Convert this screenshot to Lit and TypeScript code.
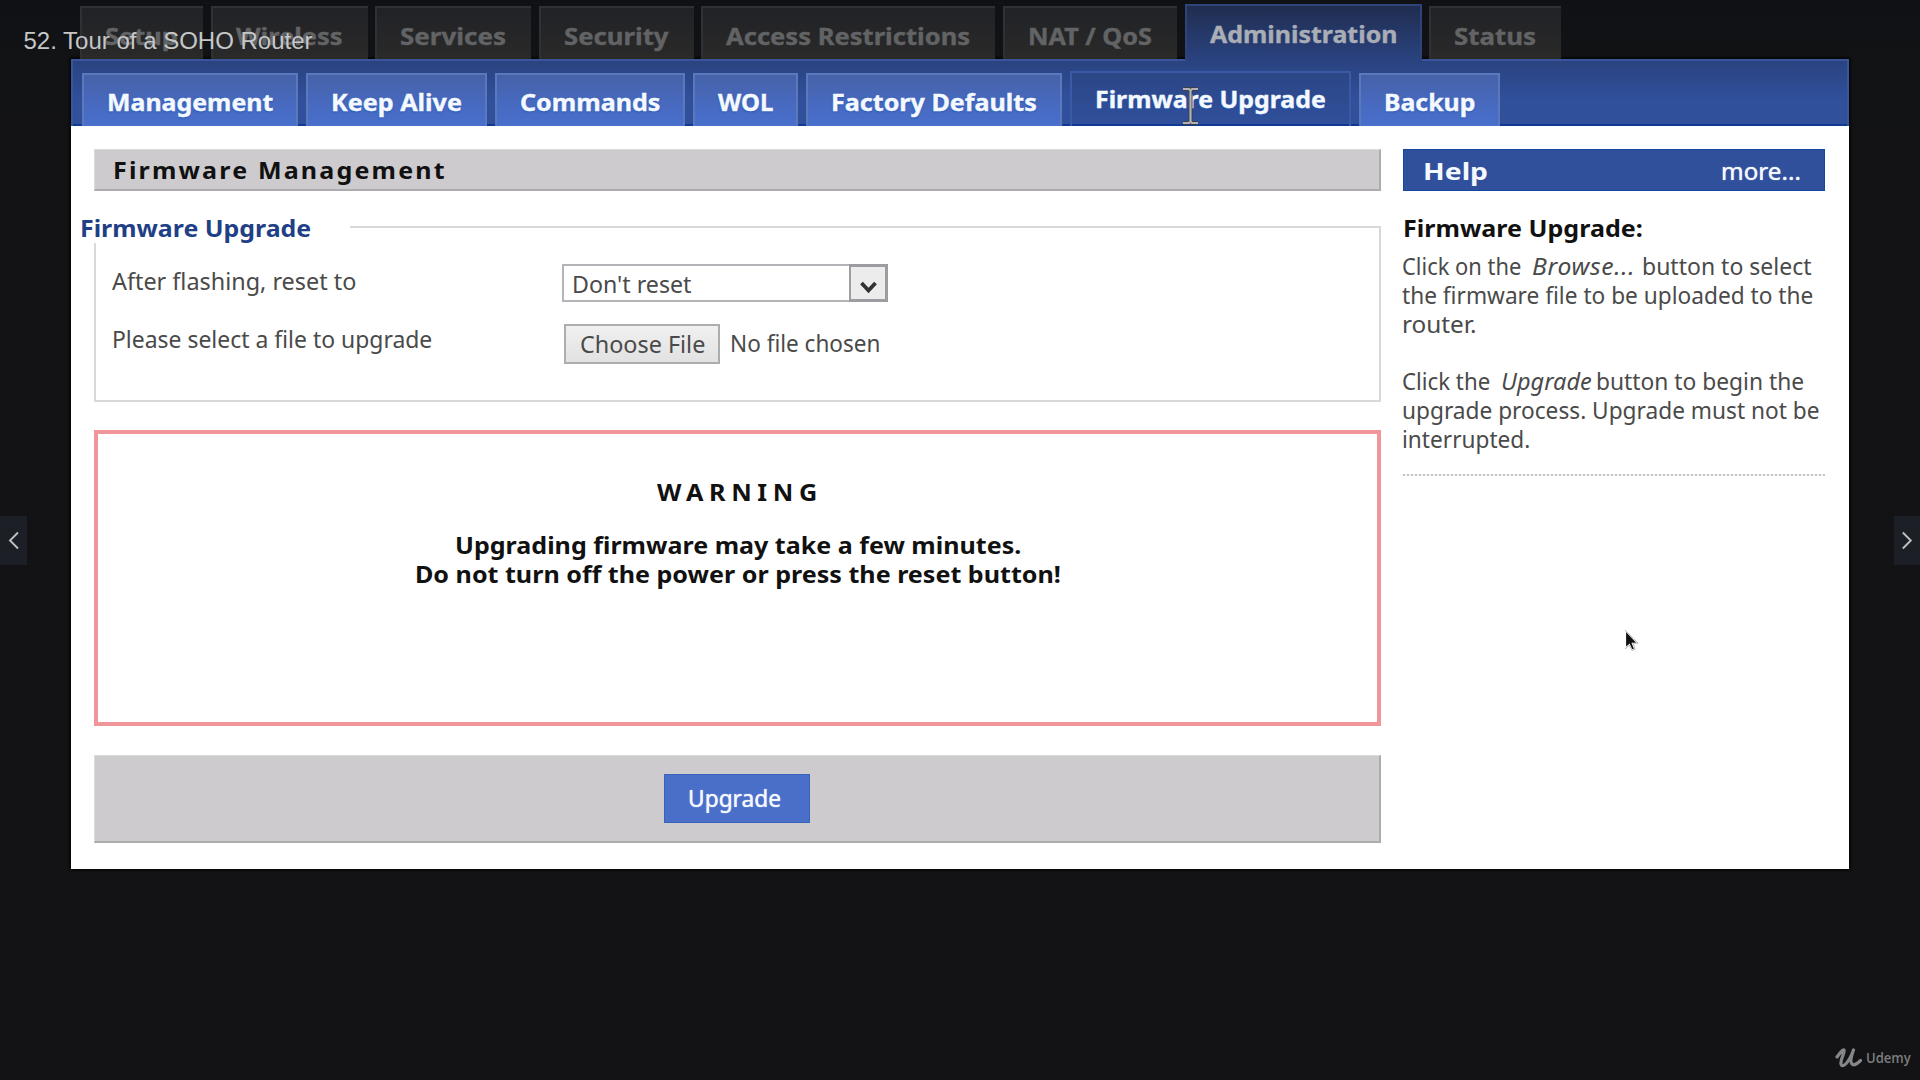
import { LitElement, html, css } from "lit";
import { customElement, property } from "lit/decorators.js";

/** A single line of text condensed or widened to a given advance width. */
@customElement("fit-text")
class FitText extends LitElement {
  @property({ type: Number }) w = 100;
  static styles = css`
    :host { display: inline-block; white-space: nowrap; vertical-align: top; text-align: left; }
    .t { display: inline-block; transform-origin: 0 50%; white-space: pre; }
  `;
  firstUpdated() {
    const t = this.renderRoot.querySelector(".t") as HTMLElement;
    const natural = t.offsetWidth;
    this.style.width = this.w + "px";
    if (natural) t.style.transform = `scaleX(${this.w / natural})`;
  }
  render() {
    return html`<span class="t"><slot></slot></span>`;
  }
}

type Tab = { label: string; w: number; on?: boolean };

const MAIN: Tab[] = [
  { label: "Setup", w: 73 },
  { label: "Wireless", w: 107 },
  { label: "Services", w: 106 },
  { label: "Security", w: 105 },
  { label: "Access Restrictions", w: 244 },
  { label: "NAT / QoS", w: 124 },
  { label: "Administration", w: 187, on: true },
  { label: "Status", w: 82 },
];

const SUB: Tab[] = [
  { label: "Management", w: 166 },
  { label: "Keep Alive", w: 131 },
  { label: "Commands", w: 140 },
  { label: "WOL", w: 55 },
  { label: "Factory Defaults", w: 206 },
  { label: "Firmware Upgrade", w: 231, on: true },
  { label: "Backup", w: 91 },
];

@customElement("app-root")
class AppRoot extends LitElement {
  static styles = css`
    :host { display: block; }
    * { box-sizing: border-box; }
    .stage {
      position: relative; width: 1920px; height: 1080px; overflow: hidden;
      background: linear-gradient(#0f1115 0, #121315 60px, #131315 200px);
      font: 23px/29px "Noto Sans", "Open Sans", sans-serif; color: #4a4a4a;
    }
    .tabs { display: flex; align-items: flex-end; height: 59px; padding-left: 80px; gap: 7.6px; }
    .tab {
      flex: none; height: 53.5px; padding: 13px 25px 0 23px; font-size: 24px; font-weight: 700; line-height: 29px;
      color: #626365; background: linear-gradient(#212226, #292929 90%, #2b2b25);
      border: solid #303136; border-width: 2px 0 0 2px; -webkit-text-stroke: .4px;
    }
    .tab.on {
      position: relative; z-index: 1; height: 57.5px; margin-bottom: -2px; color: #a9adb6; background: linear-gradient(#202d50, #2a4380);
      border-color: #2e4478; border-right-width: 2px; padding-right: 23px;
    }
    .panel { width: 1778px; height: 810px; margin-left: 71px; background: #fff; box-shadow: 0 0 3px 1px #000; }
    .sub {
      display: flex; align-items: flex-end; height: 67px; padding-left: 9px; gap: 8px;
      background: linear-gradient(#2a4380, #30509c 60%, #30509c);
      border: solid #3a569a; border-width: 2px 2px 0; box-shadow: inset 0 -2px 0 #0e3a94;
    }
    .subtab {
      flex: none; height: 53px; padding: 11.5px 23px 0; font-size: 24px; font-weight: 700; line-height: 29px; color: #f4f8ff;
      background: linear-gradient(#4562a8, #486bc4 70%, #4870cc);
      border: 2px solid #5b78bb; border-bottom: 0; text-shadow: 0 1px 2px #1d56b4; -webkit-text-stroke: .4px;
    }
    .subtab.on {
      height: 55.5px; background: linear-gradient(#2c4686, #30509c); border-color: #3b5aa6;
      box-shadow: inset 0 -2px 0 #0e3a94;
    }
    .body { display: flex; gap: 22px; padding: 23px 0 0 23px; }
    .main { width: 1287px; }
    .bar {
      height: 41.5px; padding: 5px 0 0 17.5px; background: #cdcbce;
      border: solid; border-width: 1px 2px 2px 1px; border-color: #dcdbdc #acacae #acacae #dcdbdc;
      font-weight: 700; font-size: 23px; color: #111; letter-spacing: 2px; line-height: 31px;
    }
    .group { height: 176px; margin-top: 35.5px; border: 2px solid #d8d8d8; }
    .legend {
      width: 270px; height: 29px; margin: -14px 0 0 -16px; background: #fff;
      font-size: 23.5px; font-weight: 700; color: #1f3f86;
    }
    .row { display: grid; grid-template-columns: 450px auto; justify-content: start; padding-left: 16px; align-items: start; }
    .r1 { margin-top: 21px; line-height: 35px; height: 38px; }
    .r2 { margin-top: 22px; line-height: 30px; height: 40px; }
    .select { display: flex; width: 326px; height: 38px; border: 2px solid #b4b4b8; padding-left: 8px; line-height: 36px; justify-content: space-between; }
    .drop { width: 39px; height: 38px; margin: -2px -2px 0 0; border: 3px solid #9d9da1; border-left-width: 2px; background: #ececed; }
    .drop svg { display: block; margin: 14px 0 0 9px; }
    .file { display: flex; gap: 10px; padding-left: 2px; line-height: 39px; }
    .choose { width: 155.5px; height: 40px; border: 2px solid #adadb0; background: linear-gradient(#f0f0f0, #e2e2e2); padding-left: 13.5px; line-height: 36px; }
    .warn {
      height: 296px; margin-top: 28px; border: 4px solid #f0959a; padding-top: 44px; text-align: center;
      font-size: 23.5px; font-weight: 700; color: #111;
    }
    .warn div { height: 29px; }
    .warn .head { letter-spacing: 5px; font-size: 22.5px; margin-bottom: 24px; padding-left: 4px; }
    .actions {
      display: flex; justify-content: center; height: 88px; margin-top: 29px; padding: 18px 0 0; background: #cdcbce;
      border: solid; border-width: 1px 2px 2px 1px; border-color: #dcdbdc #acacae #acacae #dcdbdc;
    }
    .btn { width: 146px; height: 49px; background: #4a6fc9; border: 1px solid #3763bd; color: #f4f8ff; padding-left: 23px; line-height: 47px; text-shadow: 0 0 1px #fff; }
    .help { width: 422px; }
    .hbar {
      display: flex; justify-content: space-between; height: 41.5px; padding: 0 23px 0 19px; line-height: 42px;
      background: #30509c; border: 1px solid #1746a0; color: #f4f8ff; font-size: 23px;
    }
    .hbar b { font-size: 24px; }
    .hbar .more { text-shadow: 0 0 1px #fff; }
    .htitle { height: 29px; margin-top: 23.5px; font-size: 23.5px; font-weight: 700; color: #111; }
    .copy { display: flex; flex-direction: column; margin: 9px 0 0 -1px; }
    .hl { display: flex; height: 28.85px; }
    .gap { height: 28.85px; }
    .hl .lead { margin-right: 11px; }
    .hl .em { font-style: italic; margin-right: 7px; }
    .hl .wide { letter-spacing: .6px; }
    .hl .tight { margin-right: 4px; }
    .dots { width: 422px; height: 2px; margin-top: 20px; background: repeating-linear-gradient(90deg, #c4c4c4 0 2px, #f3f3f3 2px 4px); }

    .title { position: absolute; left: 23.5px; top: 26px; font: 24px/29px "Liberation Sans", Arial, sans-serif; color: #c6c7c8; }
    .nav { position: absolute; top: 516px; width: 27px; height: 49px; background: #1c1f26; }
    .nav.l { left: 0; }
    .nav.r { right: 0; width: 26px; }
    .nav svg, .cursor, .ibeam { display: block; }
    .cursor { position: absolute; left: 1624px; top: 629px; }
    .ibeam { position: absolute; left: 1181px; top: 86px; }
    .brand { position: absolute; left: 1835px; top: 1046px; display: flex; align-items: center; gap: 4px; font: 600 14.5px/20px "Open Sans", "Noto Sans", sans-serif; color: #7c7d7e; }
    .brand svg { display: block; }
  `;

  render() {
    return html`
      <div class="stage">
        <nav class="tabs">
          ${MAIN.map((t) => html`<div class="tab ${t.on ? "on" : ""}"><fit-text .w=${t.w}>${t.label}</fit-text></div>`)}
        </nav>
        <section class="panel">
          <nav class="sub">
            ${SUB.map((t) => html`<div class="subtab ${t.on ? "on" : ""}"><fit-text .w=${t.w}>${t.label}</fit-text></div>`)}
          </nav>
          <div class="body">
            <main class="main">
              <div class="bar"><fit-text .w=${334}>Firmware Management</fit-text></div>
              <div class="group">
                <div class="legend"><fit-text .w=${231}>Firmware Upgrade</fit-text></div>
                <div class="row r1">
                  <fit-text .w=${244}>After flashing, reset to</fit-text>
                  <div class="select">
                    <fit-text .w=${119}>Don't reset</fit-text>
                    <div class="drop">
                      <svg width="17" height="13" viewBox="0 0 17 13"><path d="M1.5 2 L8.5 9.5 L15.5 2" fill="none" stroke="#333" stroke-width="3.8" /></svg>
                    </div>
                  </div>
                </div>
                <div class="row r2">
                  <fit-text .w=${320}>Please select a file to upgrade</fit-text>
                  <div class="file">
                    <div class="choose"><fit-text .w=${125}>Choose File</fit-text></div>
                    <fit-text .w=${150}>No file chosen</fit-text>
                  </div>
                </div>
              </div>
              <div class="warn">
                <div class="head"><fit-text .w=${166}>WARNING</fit-text></div>
                <div><fit-text .w=${566}>Upgrading firmware may take a few minutes.</fit-text></div>
                <div><fit-text .w=${646}>Do not turn off the power or press the reset button!</fit-text></div>
              </div>
              <div class="actions"><div class="btn"><fit-text .w=${93}>Upgrade</fit-text></div></div>
            </main>
            <aside class="help">
              <div class="hbar"><b><fit-text .w=${65}>Help</fit-text></b><fit-text class="more" .w=${80}>more...</fit-text></div>
              <div class="htitle"><fit-text .w=${240}>Firmware Upgrade:</fit-text></div>
              <div class="copy">
                <div class="hl">
                  <fit-text class="lead" .w=${119}>Click on the</fit-text>
                  <fit-text class="em wide" .w=${103}>Browse...</fit-text>
                  <fit-text .w=${170}>button to select</fit-text>
                </div>
                <div class="hl"><fit-text .w=${411}>the firmware file to be uploaded to the</fit-text></div>
                <div class="hl"><fit-text .w=${74}>router.</fit-text></div>
                <div class="gap"></div>
                <div class="hl">
                  <fit-text class="lead" .w=${88}>Click the</fit-text>
                  <fit-text class="em tight" .w=${91}>Upgrade</fit-text>
                  <fit-text .w=${208}>button to begin the</fit-text>
                </div>
                <div class="hl"><fit-text .w=${418}>upgrade process. Upgrade must not be</fit-text></div>
                <div class="hl"><fit-text .w=${128}>interrupted.</fit-text></div>
              </div>
              <div class="dots"></div>
            </aside>
          </div>
        </section>

        <svg class="ibeam" width="19" height="40" viewBox="0 0 19 40">
          <path d="M2 3 H8 L9.5 4.5 L11 3 H17 M9.5 4 V36 M2 37 H8 L9.5 35.5 L11 37 H17" fill="none" stroke="#3a3f4c" stroke-width="4" />
          <path d="M2 3 H8 L9.5 4.5 L11 3 H17 M9.5 4 V36 M2 37 H8 L9.5 35.5 L11 37 H17" fill="none" stroke="#b3b1b2" stroke-width="2.2" />
        </svg>
        <svg class="cursor" width="16" height="23" viewBox="0 0 16 23">
          <path d="M1.5 1.5 V19 L5.4 15.4 L8 21 L10.6 20 L8.3 14.4 H13.6 Z" fill="#111" stroke="#fff" stroke-width="1.2" />
          <path d="M1 1 L14 14.2 H9 L11.2 20.2 L8 21.5 L5.3 16.2 L1 20" fill="none" stroke="#9a9a9a" stroke-width=".7" />
        </svg>
        <div class="title"><fit-text .w=${289}>52. Tour of a SOHO Router</fit-text></div>
        <div class="nav l"><svg width="27" height="49" viewBox="0 0 27 49"><path d="M18 16.5 L10 24.5 L18 32.5" fill="none" stroke="#bfc0c1" stroke-width="1.9" /></svg></div>
        <div class="nav r"><svg width="26" height="49" viewBox="0 0 26 49"><path d="M8.8 16.5 L16.8 24.5 L8.8 32.5" fill="none" stroke="#bfc0c1" stroke-width="1.9" /></svg></div>
        <div class="brand">
          <svg width="27" height="24" viewBox="0 0 27 24">
            <path d="M2 11 C5 7 8 3 9 4 C10.5 6 5 13 6 18 C7 23 14 17 18.5 4 C16 11 15 17 17.5 18.5 C20 19.5 23 17 25.5 14.5" fill="none" stroke="#858687" stroke-width="3.2" stroke-linecap="round" stroke-linejoin="round" />
          </svg>
          <fit-text .w=${45}>Udemy</fit-text>
        </div>
      </div>
    `;
  }
}
